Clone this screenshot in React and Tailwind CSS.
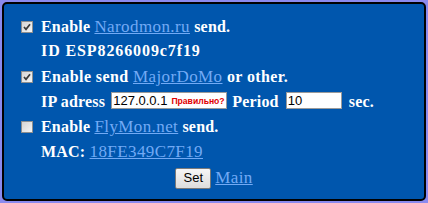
import React from "react";

function Check({ checked }) {
  return (
    <span className="w-[12px] h-[12px] mr-[8px] flex items-center justify-center border border-[#8e8f8f] bg-gradient-to-br from-[#d4d4d4] to-[#f6f6f6] shrink-0">
      {checked && (
        <svg width="8" height="8" viewBox="0 0 8 8">
          <path d="M1 4 L3 6.3 L7 1.2" stroke="#3a3a3a" strokeWidth="1.7" fill="none" />
        </svg>
      )}
    </span>
  );
}

const link = "text-[#72aaf5] underline font-normal text-[17px] tracking-[0.4px]";

export default function App() {
  return (
    <div className="w-[428px] h-[203px] bg-[#8a8aee] p-[2px] font-['Liberation_Serif',serif]">
      <div className="w-full h-full bg-[#0056ad] border-2 border-black rounded-[5px] text-white font-bold text-[16px] leading-[18px] tracking-[0.2px] pt-[11px]">
        <div className="h-[24px] flex items-center pl-[17px]">
          <Check checked />
          <span>
            Enable <a className={link}>Narodmon.ru</a> send.
          </span>
        </div>
        <div className="h-[24px] flex items-center pl-[37px] tracking-[0.9px]">ID ESP8266009c7f19</div>
        <div className="h-[28px] flex items-center pl-[17px] tracking-[0.4px]">
          <Check checked />
          <span>
            Enable send <a className={link}>MajorDoMo</a> or other.
          </span>
        </div>
        <div className="h-[22px] flex items-center pl-[37px]">
          <span>IP adress</span>
          <span className="ml-[6px] mb-[3px] w-[116px] h-[17px] bg-white border border-[#9a9a9a] flex items-center pl-[1px] font-['Liberation_Sans',sans-serif] font-normal tracking-normal overflow-hidden">
            <span className="text-black text-[13px]">127.0.0.1</span>
            <span className="ml-[4px] text-[#e00000] text-[8.6px] font-bold">Правильно?</span>
          </span>
          <span className="ml-[5px]">Period</span>
          <span className="ml-[7px] mb-[3px] w-[56px] h-[17px] bg-white border border-[#9a9a9a] flex items-center pl-[1px] font-['Liberation_Sans',sans-serif] font-normal tracking-normal text-black text-[13px]">
            10
          </span>
          <span className="ml-[7px]">sec.</span>
        </div>
        <div className="h-[28px] flex items-center pl-[17px]">
          <Check />
          <span>
            Enable <a className={link}>FlyMon.net</a> send.
          </span>
        </div>
        <div className="h-[22px] flex items-center pl-[37px]">
          <span>
            MAC: <a className={link}>18FE349C7F19</a>
          </span>
        </div>
        <div className="h-[30px] flex items-center justify-center">
          <button className="w-[36px] h-[21px] border border-[#7a7a7a] rounded-[2px] bg-gradient-to-b from-[#f6f6f6] to-[#dddddd] text-black font-normal text-[13px] tracking-normal font-['Liberation_Sans',sans-serif]">
            Set
          </button>
          <a className={link + " ml-[4px]"}>Main</a>
        </div>
      </div>
    </div>
  );
}
